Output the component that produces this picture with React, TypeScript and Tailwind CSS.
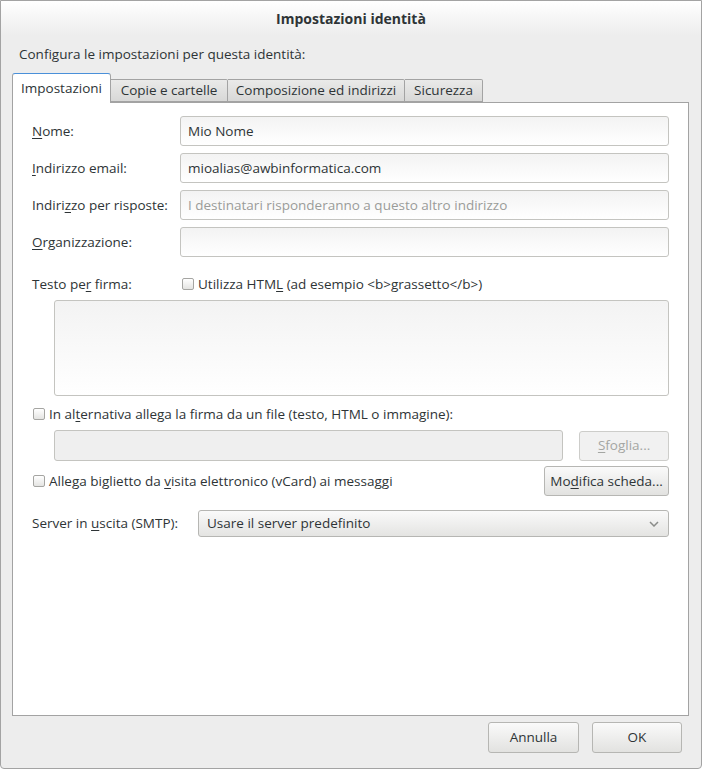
import React from 'react';

const font = { fontFamily: '"Open Sans", "DejaVu Sans", sans-serif' };

function U({ children }: { children: React.ReactNode }) {
  return <span className="underline underline-offset-2">{children}</span>;
}

function Check() {
  return (
    <span className="inline-block w-[12px] h-[12px] rounded-[2px] border border-[#a5a5a2] bg-gradient-to-b from-white to-[#e4e4e2] shrink-0" />
  );
}

function Field({ value, placeholder }: { value?: string; placeholder?: string }) {
  return (
    <div className="flex-1 h-[30px] rounded-[3px] border border-[#c4c4c0] bg-gradient-to-b from-[#f3f3f3] to-white flex items-center px-[7px]">
      {value ? (
        <span className="text-[#2e3436]">{value}</span>
      ) : (
        <span className="text-[#9a9c99]">{placeholder}</span>
      )}
    </div>
  );
}

function Button({
  children,
  className = '',
  disabled = false,
}: {
  children: React.ReactNode;
  className?: string;
  disabled?: boolean;
}) {
  return (
    <div
      className={`flex items-center justify-center rounded-[3px] border ${
        disabled
          ? 'border-[#cdcdca] bg-[#f1f1f1] text-[#a4a6a3]'
          : 'border-[#b6b6b3] bg-gradient-to-b from-[#fafafa] to-[#e2e2e0] text-[#2e3436]'
      } ${className}`}
    >
      {children}
    </div>
  );
}

export default function App() {
  const tabs = [
    { name: 'Copie e cartelle', w: 'w-[117px]' },
    { name: 'Composizione ed indirizzi', w: 'w-[177px]' },
    { name: 'Sicurezza', w: 'w-[78px]' },
  ];

  return (
    <div
      style={font}
      className="w-[702px] h-[769px] bg-[#ededed] text-[13.5px] text-[#2e3436] border border-[#a3a3a3] rounded-b-[4px] flex flex-col overflow-hidden"
    >
      {/* title bar */}
      <div className="h-[34px] shrink-0 flex items-center justify-center bg-gradient-to-b from-white to-[#ededed] font-bold text-[14px]">
        Impostazioni identità
      </div>

      <div className="px-[18px] pt-[9px] h-[38px] shrink-0">Configura le impostazioni per questa identità:</div>

      {/* tabs */}
      <div className="flex items-end ml-[11px] h-[29px] shrink-0 relative z-10">
        <div className="w-[99px] h-[30px] -mb-[1px] bg-white border border-b-0 border-[#a3a3a3] border-t-[#4a90d9] rounded-t-[3px] flex items-center justify-center">
          Impostazioni
        </div>
        {tabs.map((t) => (
          <div
            key={t.name}
            className={`${t.w} h-[23px] border border-l-0 border-[#a3a3a3] bg-gradient-to-b from-[#eaeae9] to-[#d8d8d7] flex items-center justify-center rounded-tr-[2px]`}
          >
            {t.name}
          </div>
        ))}
      </div>

      {/* panel */}
      <div className="mx-[11px] mr-[12px] h-[614px] shrink-0 bg-white border border-[#a3a3a3] px-[19px] pt-[13px] flex flex-col">
        <div className="flex flex-col gap-[7px]">
          <div className="flex items-center">
            <div className="w-[148px]">
              <U>N</U>ome:
            </div>
            <Field value="Mio Nome" />
          </div>
          <div className="flex items-center">
            <div className="w-[148px]">
              <U>I</U>ndirizzo email:
            </div>
            <Field value="mioalias@awbinformatica.com" />
          </div>
          <div className="flex items-center">
            <div className="w-[148px]">
              Indiri<U>z</U>zo per risposte:
            </div>
            <Field placeholder="I destinatari risponderanno a questo altro indirizzo" />
          </div>
          <div className="flex items-center">
            <div className="w-[148px]">
              <U>O</U>rganizzazione:
            </div>
            <Field />
          </div>
        </div>

        <div className="flex items-center mt-[16px] h-[22px]">
          <div className="w-[150px]">
            Testo pe<U>r</U> firma:
          </div>
          <Check />
          <span className="ml-[4px]">
            Utilizza HTM<U>L</U> (ad esempio &lt;b&gt;grassetto&lt;/b&gt;)
          </span>
        </div>

        <div className="ml-[22px] mt-[5px] h-[96px] rounded-[3px] border border-[#c4c4c0] bg-gradient-to-b from-[#f3f3f3] to-white" />

        <div className="flex items-center mt-[7px] h-[22px] ml-[1px]">
          <Check />
          <span className="ml-[4px]">
            In al<U>t</U>ernativa allega la firma da un file (testo, HTML o immagine):
          </span>
        </div>

        <div className="flex items-center mt-[5px] ml-[22px]">
          <div className="w-[510px] h-[31px] rounded-[3px] border border-[#c4c4c0] bg-[#efefef]" />
          <Button disabled className="ml-[16px] w-[90px] h-[30px]">
            <U>S</U>foglia...
          </Button>
        </div>

        <div className="flex items-center justify-between mt-[5px]">
          <div className="flex items-center ml-[1px]">
            <Check />
            <span className="ml-[4px]">
              Allega biglietto da <U>v</U>isita elettronico (vCard) ai messaggi
            </span>
          </div>
          <Button className="w-[125px] h-[30px]">
            Mo<U>d</U>ifica scheda...
          </Button>
        </div>

        <div className="flex items-center mt-[14px]">
          <div className="w-[166px]">
            Server in <U>u</U>scita (SMTP):
          </div>
          <div className="flex-1 h-[27px] rounded-[3px] border border-[#b6b6b3] bg-gradient-to-b from-[#fafafa] to-[#e4e4e2] flex items-center justify-between px-[8px]">
            <span>Usare il server predefinito</span>
            <svg width="10" height="6" viewBox="0 0 10 6" className="mr-[1px]">
              <path d="M1 1 L5 5 L9 1" fill="none" stroke="#8a8c89" strokeWidth="1.5" />
            </svg>
          </div>
        </div>
      </div>

      {/* footer */}
      <div className="flex justify-end gap-[13px] pr-[19px] pt-[6px]">
        <Button className="w-[91px] h-[31px]">Annulla</Button>
        <Button className="w-[90px] h-[31px]">OK</Button>
      </div>
    </div>
  );
}
